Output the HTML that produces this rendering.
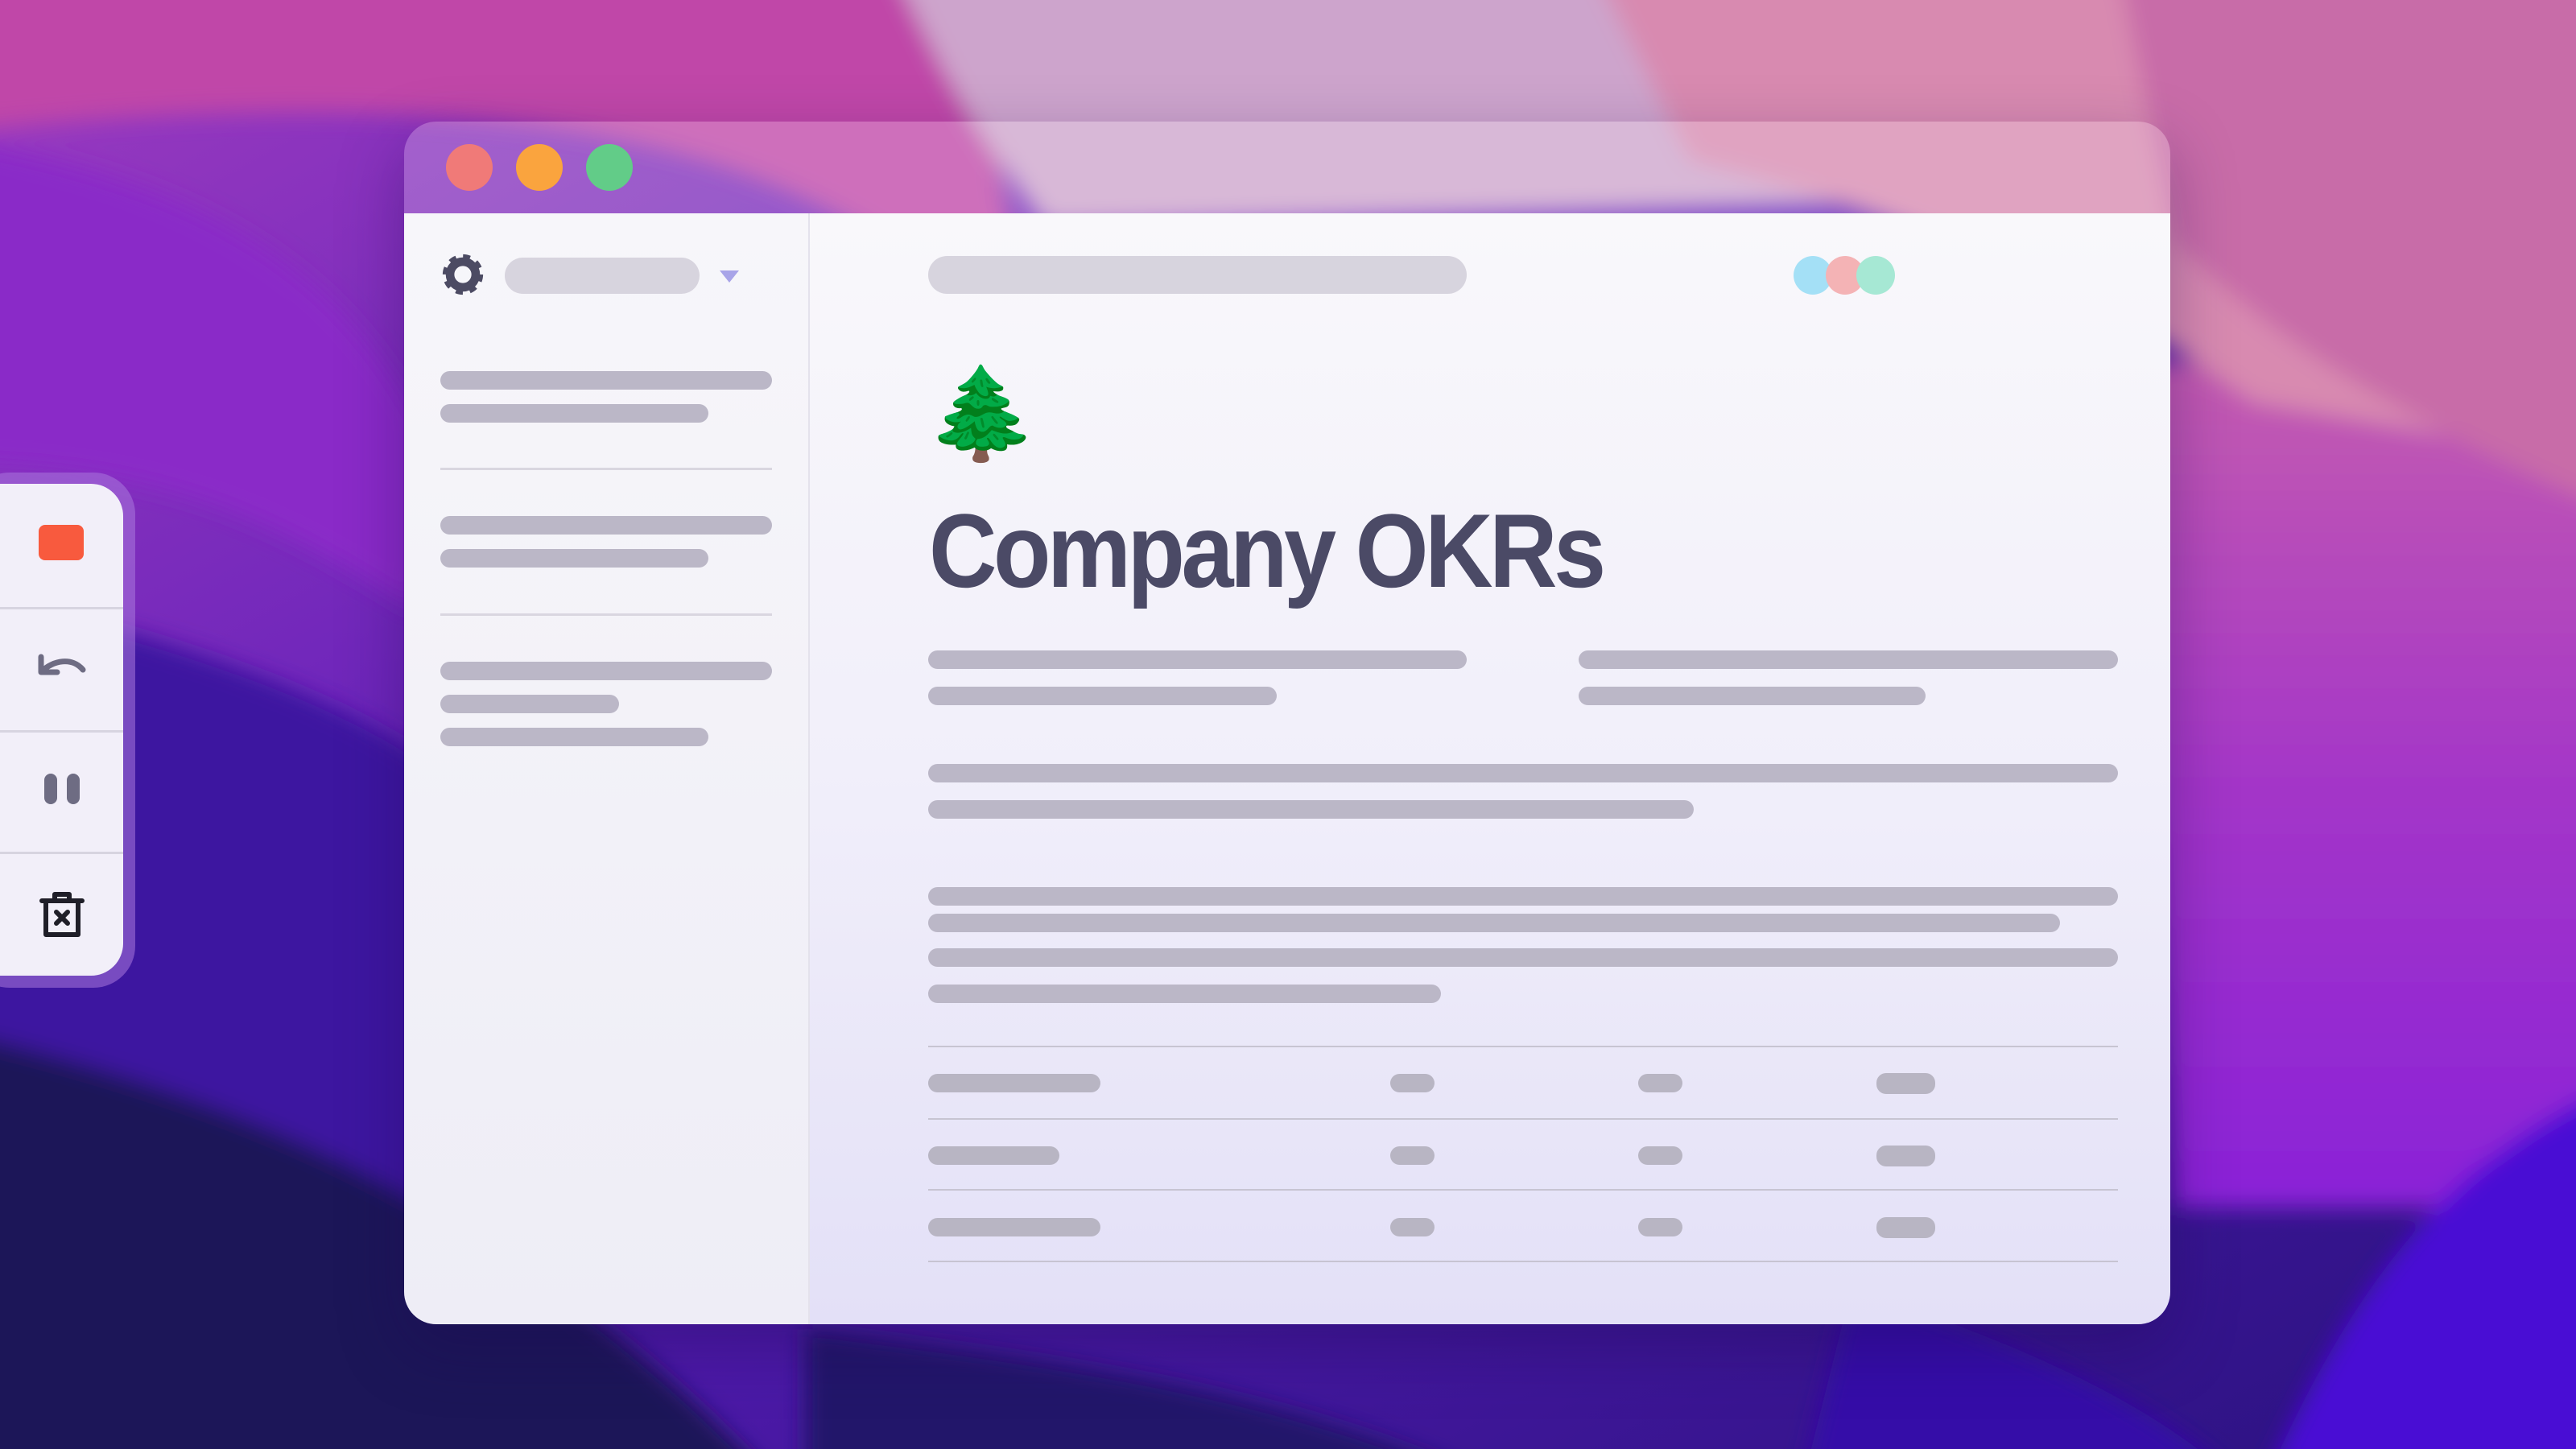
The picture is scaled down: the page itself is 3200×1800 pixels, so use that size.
<!DOCTYPE html>
<html><head><meta charset="utf-8">
<style>
*{margin:0;padding:0;box-sizing:border-box}
html,body{width:3200px;height:1800px;overflow:hidden;font-family:"Liberation Sans",sans-serif}
body{position:relative;background:#5a22b8}
.bg{position:absolute;left:0;top:0;width:3200px;height:1800px;display:block}
.win{position:absolute;left:502px;top:151px;width:2194px;height:1494px;border-radius:40px;overflow:hidden;box-shadow:0 30px 80px rgba(30,10,80,.35)}
.tb{position:absolute;left:0;top:0;width:100%;height:114px;background:rgba(255,255,255,.22)}
.tl{position:absolute;top:28px;width:58px;height:58px;border-radius:50%}
.side{position:absolute;left:0;top:114px;width:504px;bottom:0;background:linear-gradient(#f7f6fa,#eeedf6);border-right:2px solid #e4e2ec}
.main{position:absolute;left:504px;top:114px;right:0;bottom:0;background:linear-gradient(#f9f8fb 0%,#f1effa 50%,#e3e0f7 100%)}
.b{position:absolute;height:23px;border-radius:12px;background:#bbb7c7}
.p{position:absolute;background:#d7d4de;border-radius:24px}
.hl{position:absolute;height:3px;background:#d9d6e0}
.tl2{position:absolute;height:2px;background:#c7c4d2}
.tbx{position:absolute;left:0;top:0;width:3200px;height:1800px;overflow:hidden}
</style></head><body>
<svg class="bg" viewBox="0 0 3200 1800" preserveAspectRatio="none">
<defs>
<filter id="f" x="-20%" y="-20%" width="140%" height="140%"><feGaussianBlur stdDeviation="14"/></filter>
<linearGradient id="g0" x1="0" y1="0" x2="1" y2="1"><stop offset="0" stop-color="#9c3cc0"/><stop offset=".45" stop-color="#5a1cb8"/><stop offset="1" stop-color="#2a1280"/></linearGradient>
<linearGradient id="gr" x1="0" y1="0" x2="0" y2="1"><stop offset="0" stop-color="#c45cb0"/><stop offset=".5" stop-color="#a436c8"/><stop offset="1" stop-color="#8a22d8"/></linearGradient>
</defs>
<rect width="3200" height="1800" fill="url(#g0)"/>
<g filter="url(#f)">
<path d="M-200 -200H1150C1250 150 1240 250 1260 300L1100 300C900 180 600 80 -200 180Z" fill="#c046a8"/>
<path d="M-200 150C200 200 400 300 520 520L520 760C300 620 150 560 -200 580Z" fill="#8a2cc8"/>
<path d="M2650 450H3400V1500H2700Z" fill="url(#gr)"/>
<path d="M1040 -200H3400V700C3100 500 2700 300 2400 250L1300 280C1200 150 1150 60 1040 -200Z" fill="#cda4cc"/>
<path d="M1900 -200H3400V600L2800 500C2600 350 2300 250 2100 200Z" fill="#d88ab0"/>
<path d="M2600 -200H3400V700C3050 560 2850 450 2700 300Z" fill="#c86ca8"/>
<path d="M2750 2000C2900 1600 3050 1380 3400 1300V2000Z" fill="#4810d4"/>
<path d="M2300 1600C2600 1700 2800 1800 2900 2000H2200Z" fill="#3410a8"/>
<path d="M-200 700C300 800 500 900 600 1000L600 2000H-200Z" fill="#3e18a0"/>
<path d="M-200 1250C300 1350 700 1500 1100 2000H-200Z" fill="#1e1258"/>
<path d="M1000 1650C1400 1700 1800 1750 2100 2000H1000Z" fill="#20146a"/>
</g>
</svg>

<div class="win">
 <div class="tb"></div>
 <div class="tl" style="left:52px;background:#f07a78"></div>
 <div class="tl" style="left:139px;background:#faa43e"></div>
 <div class="tl" style="left:226px;background:#62cc88"></div>
 <div class="side"></div>
 <div class="main"></div>
</div>

<svg style="position:absolute;left:546px;top:312px" width="58" height="58" viewBox="0 0 24 24">
<circle cx="12" cy="12" r="8.4" fill="none" stroke="#4c4b63" stroke-width="4" stroke-dasharray="3.3 3.3"/>
<circle cx="12" cy="12" r="6.6" fill="none" stroke="#4c4b63" stroke-width="4.4"/>
</svg>
<div class="p" style="left:627px;top:320px;width:242px;height:45px"></div>
<svg style="position:absolute;left:894px;top:336px" width="24" height="16"><path d="M0 0H24L12 15Z" fill="#a8a4e8"/></svg>
<div class="b" style="left:547px;top:461px;width:412px"></div>
<div class="b" style="left:547px;top:502px;width:333px"></div>
<div class="hl" style="left:547px;top:581px;width:412px"></div>
<div class="b" style="left:547px;top:641px;width:412px"></div>
<div class="b" style="left:547px;top:682px;width:333px"></div>
<div class="hl" style="left:547px;top:762px;width:412px"></div>
<div class="b" style="left:547px;top:822px;width:412px"></div>
<div class="b" style="left:547px;top:863px;width:222px"></div>
<div class="b" style="left:547px;top:904px;width:333px"></div>

<div class="p" style="left:1153px;top:318px;width:669px;height:47px"></div>
<div style="position:absolute;left:2228px;top:318px;width:48px;height:48px;border-radius:50%;background:#a4e0f6"></div>
<div style="position:absolute;left:2268px;top:318px;width:48px;height:48px;border-radius:50%;background:#f4b3b5"></div>
<div style="position:absolute;left:2306px;top:318px;width:48px;height:48px;border-radius:50%;background:#a6e8d4"></div>
<div style="position:absolute;left:1150px;top:440px;font-size:112px;line-height:150px;font-family:'Noto Color Emoji','DejaVu Sans',sans-serif">🌲</div>
<div style="position:absolute;left:1154px;top:604px;font-size:130px;line-height:160px;font-weight:bold;color:#4b4a66;letter-spacing:-5px;white-space:nowrap;transform:scaleX(0.9);transform-origin:0 0">Company OKRs</div>

<div class="b" style="left:1153px;top:808px;width:669px"></div>
<div class="b" style="left:1961px;top:808px;width:670px"></div>
<div class="b" style="left:1153px;top:853px;width:433px"></div>
<div class="b" style="left:1961px;top:853px;width:431px"></div>
<div class="b" style="left:1153px;top:949px;width:1478px"></div>
<div class="b" style="left:1153px;top:994px;width:951px"></div>
<div class="b" style="left:1153px;top:1102px;width:1478px"></div>
<div class="b" style="left:1153px;top:1135px;width:1406px"></div>
<div class="b" style="left:1153px;top:1178px;width:1478px"></div>
<div class="b" style="left:1153px;top:1223px;width:637px"></div>

<div class="tl2" style="left:1153px;top:1299px;width:1478px"></div>
<div class="tl2" style="left:1153px;top:1389px;width:1478px"></div>
<div class="tl2" style="left:1153px;top:1477px;width:1478px"></div>
<div class="tl2" style="left:1153px;top:1566px;width:1478px"></div>

<div class="b" style="left:1153px;top:1334px;width:214px;background:#b8b5c3"></div>
<div class="b" style="left:1727px;top:1334px;width:55px;background:#b8b5c3"></div>
<div class="b" style="left:2035px;top:1334px;width:55px;background:#b8b5c3"></div>
<div class="b" style="left:2331px;top:1333px;width:73px;height:26px;background:#b8b5c3"></div>
<div class="b" style="left:1153px;top:1424px;width:163px;background:#b8b5c3"></div>
<div class="b" style="left:1727px;top:1424px;width:55px;background:#b8b5c3"></div>
<div class="b" style="left:2035px;top:1424px;width:55px;background:#b8b5c3"></div>
<div class="b" style="left:2331px;top:1423px;width:73px;height:26px;background:#b8b5c3"></div>
<div class="b" style="left:1153px;top:1513px;width:214px;background:#b8b5c3"></div>
<div class="b" style="left:1727px;top:1513px;width:55px;background:#b8b5c3"></div>
<div class="b" style="left:2035px;top:1513px;width:55px;background:#b8b5c3"></div>
<div class="b" style="left:2331px;top:1512px;width:73px;height:26px;background:#b8b5c3"></div>

<div class="tbx">
<div style="position:absolute;left:-40px;top:587px;width:208px;height:640px;border-radius:52px;background:rgba(170,120,220,.55)"></div>
<div style="position:absolute;left:-40px;top:601px;width:193px;height:611px;border-radius:40px;background:#f2eff9"></div>
<div style="position:absolute;left:0;top:754px;width:153px;height:3px;background:#d7d4e0"></div>
<div style="position:absolute;left:0;top:907px;width:153px;height:3px;background:#d7d4e0"></div>
<div style="position:absolute;left:0;top:1058px;width:153px;height:3px;background:#d7d4e0"></div>
<div style="position:absolute;left:48px;top:652px;width:56px;height:44px;border-radius:8px;background:#f85a3e"></div>
<svg style="position:absolute;left:46px;top:810px" width="62" height="40" viewBox="0 0 62 40"><path d="M5 6V25H25M6 24C20 10 44 6 57 22" fill="none" stroke="#6e6c83" stroke-width="7" stroke-linecap="round" stroke-linejoin="round"/></svg>
<div style="position:absolute;left:55px;top:961px;width:16px;height:38px;border-radius:8px;background:#6e6c83"></div>
<div style="position:absolute;left:83px;top:961px;width:16px;height:38px;border-radius:8px;background:#6e6c83"></div>
<svg style="position:absolute;left:48px;top:1105px" width="58" height="64" viewBox="0 0 58 64"><path d="M4 14H54M20 13V6H38V13M9 15V56H49V15" fill="none" stroke="#1f1e28" stroke-width="6" stroke-linecap="round" stroke-linejoin="round"/><path d="M22 28L36 42M36 28L22 42" stroke="#1f1e28" stroke-width="6" stroke-linecap="round"/></svg>
</div>
</body></html>
